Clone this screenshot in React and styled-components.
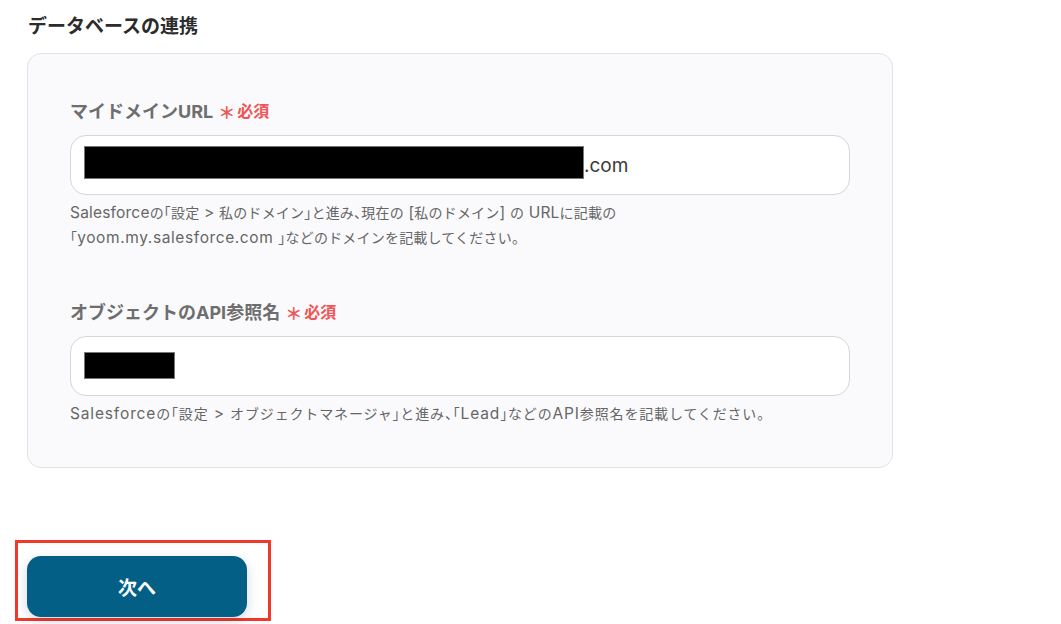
import React from "react"
import styled, { createGlobalStyle } from "styled-components"

const Global = createGlobalStyle`
  body {
    margin: 0;
    background: #ffffff;
    font-family: Inter, "Noto Sans CJK JP", sans-serif;
    color: #333333;
  }
`

const Page = styled.div`
  width: 1061px;
  height: 624px;
  padding: 13px 0 0 27px;
  box-sizing: border-box;
  overflow: hidden;
`

const Title = styled.h2`
  margin: 0 0 12px 1px;
  font-size: 19px;
  line-height: 28px;
  font-weight: 700;
  color: #2c2c2c;
`

const Card = styled.section`
  width: 866px;
  box-sizing: border-box;
  padding: 44px 42px 41px 42px;
  background: #fafafc;
  border: 1px solid #e2e2e8;
  border-radius: 14px;
`

const Field = styled.div`
  & + & {
    margin-top: 49px;
  }
`

const Label = styled.div`
  display: flex;
  align-items: center;
  gap: 5px;
  height: 24px;
  font-size: 18px;
  font-weight: 700;
  color: #6e6e6e;
`

const Required = styled.span`
  display: flex;
  align-items: center;
  gap: 2px;
  font-size: 16px;
  font-weight: 700;
  color: #f05454;

  &::before {
    content: "＊";
    font-size: 17px;
    margin-top: 3px;
  }
`

const Input = styled.div`
  margin-top: 13px;
  height: 60px;
  box-sizing: border-box;
  padding: 0 13px;
  display: flex;
  align-items: center;
  background: #ffffff;
  border: 1px solid #d6d6dc;
  border-radius: 16px;
  font-size: 19px;
  color: #3a3a3a;
`

const Redact = styled.span`
  display: inline-block;
  width: ${({ w }) => w}px;
  height: ${({ h }) => h}px;
  margin-bottom: ${({ lift }) => lift || 0}px;
  background: #000000;
  border: 1px solid #777777;
  box-sizing: border-box;
`

const Help = styled.p`
  margin: 5px 0 0;
  font-family: "Noto Sans CJK JP", sans-serif;
  font-size: 14px;
  line-height: 24px;
  color: #666666;
  font-feature-settings: "halt" 1;
  letter-spacing: ${({ wide }) => (wide ? "0.85px" : "0.2px")};
  white-space: nowrap;
`

const En = styled.span`
  font-family: Inter, sans-serif;
  font-size: 15.5px;
  letter-spacing: ${({ loose }) => (loose ? "0.6px" : "inherit")};
`

const Footer = styled.div`
  margin-top: 72px;
  margin-left: -12px;
`

const Highlight = styled.div`
  display: inline-flex;
  padding: 13px 21px 1px 9px;
  border: 3px solid #f3382a;
`

const Button = styled.button`
  width: 220px;
  height: 61px;
  border: none;
  border-radius: 14px;
  background: #045f86;
  color: #ffffff;
  font-family: Inter, "Noto Sans CJK JP", sans-serif;
  font-size: 19px;
  font-weight: 700;
  box-shadow: 0 4px 12px rgba(4, 40, 70, 0.18);
  cursor: pointer;
`

export default function App() {
  return (
    <Page>
      <Global />
      <Title>データベースの連携</Title>
      <Card>
        <Field>
          <Label>
            マイドメインURL<Required>必須</Required>
          </Label>
          <Input>
            <Redact w={500} h={33} lift={5} />
            .com
          </Input>
          <Help>
            <En>Salesforce</En>の「設定<En> &gt; </En>私のドメイン」と進み、現在の<En> [</En>私のドメイン<En>] </En>の<En> URL</En>に記載の
            <br />
            「<En loose>yoom.my.salesforce.com </En>」などのドメインを記載してください。
          </Help>
        </Field>
        <Field>
          <Label>
            オブジェクトのAPI参照名<Required>必須</Required>
          </Label>
          <Input>
            <Redact w={91} h={27} lift={2} />
          </Input>
          <Help wide>
            <En>Salesforce</En>の「設定<En> &gt; </En>オブジェクトマネージャ」と進み、「<En>Lead</En>」などの<En>API</En>参照名を記載してください。
          </Help>
        </Field>
      </Card>
      <Footer>
        <Highlight>
          <Button>次へ</Button>
        </Highlight>
      </Footer>
    </Page>
  )
}
